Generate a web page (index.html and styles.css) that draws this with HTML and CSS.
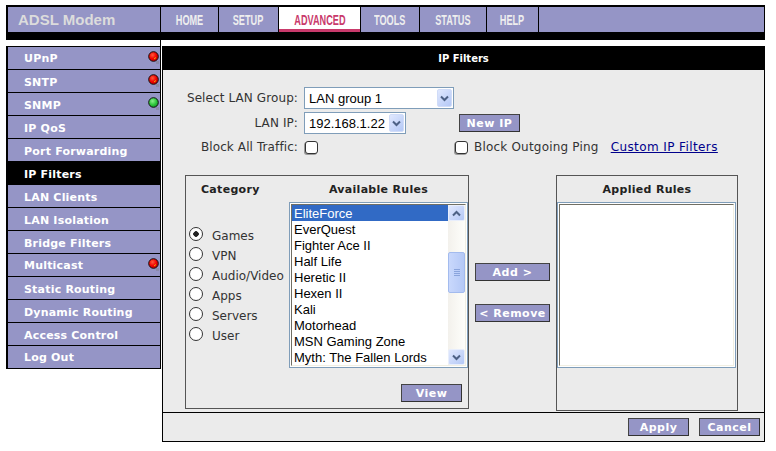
FILE: index.html
```html
<!DOCTYPE html>
<html lang="en">
<head>
<meta charset="utf-8">
<title>ADSL Modem - IP Filters</title>
<link rel="stylesheet" href="styles.css">
</head>
<body>
<svg class="defs" width="0" height="0" aria-hidden="true">
  <defs>
    <radialGradient id="red" cx="40%" cy="35%" r="65%"><stop offset="0" stop-color="#ff5a3a"/><stop offset=".6" stop-color="#f00000"/><stop offset="1" stop-color="#c80000"/></radialGradient>
    <radialGradient id="green" cx="40%" cy="35%" r="65%"><stop offset="0" stop-color="#8af08a"/><stop offset=".6" stop-color="#2fc83c"/><stop offset="1" stop-color="#159a28"/></radialGradient>
    <symbol id="led-red" viewBox="0 0 12 13"><path d="M8 10l3 0 0 3-3 0z" fill="#8a8aa8"/><circle cx="5.5" cy="5.5" r="4.8" fill="url(#red)" stroke="#111" stroke-width="1"/><path d="M6 8l2-1.5" stroke="#e9b400" stroke-width="1"/></symbol>
    <symbol id="led-green" viewBox="0 0 12 13"><path d="M8 10l3 0 0 3-3 0z" fill="#8a8aa8"/><circle cx="5.5" cy="5.5" r="4.8" fill="url(#green)" stroke="#111" stroke-width="1"/></symbol>
    <symbol id="chev-down" viewBox="0 0 9 7"><path d="M1 1.5l3.5 3.5 3.5-3.5" fill="none" stroke="#4d6185" stroke-width="2"/></symbol>
    <symbol id="chev-up" viewBox="0 0 9 7"><path d="M1 5.5l3.5-3.5 3.5 3.5" fill="none" stroke="#4d6185" stroke-width="2"/></symbol>
  </defs>
</svg>
<div class="frame">
  <header class="topbar">
    <div class="brand">ADSL Modem</div>
    <nav class="tabs">
      <a class="tab tab-home"><span>HOME</span></a>
      <a class="tab tab-setup"><span>SETUP</span></a>
      <a class="tab tab-adv active"><span>ADVANCED</span></a>
      <a class="tab tab-tools"><span>TOOLS</span></a>
      <a class="tab tab-status"><span>STATUS</span></a>
      <a class="tab tab-help"><span>HELP</span></a>
      <span class="tab-rest"></span>
    </nav>
  </header>
  <div class="strip"><span class="strip-left"></span><span class="strip-right"></span></div>
  <div class="columns">
    <aside class="side">
      <a class="side-item"><span>UPnP</span><svg class="led"><use href="#led-red"/></svg></a>
      <a class="side-item"><span>SNTP</span><svg class="led"><use href="#led-red"/></svg></a>
      <a class="side-item"><span>SNMP</span><svg class="led"><use href="#led-green"/></svg></a>
      <a class="side-item"><span>IP QoS</span></a>
      <a class="side-item"><span>Port Forwarding</span></a>
      <a class="side-item current"><span>IP Filters</span></a>
      <a class="side-item"><span>LAN Clients</span></a>
      <a class="side-item"><span>LAN Isolation</span></a>
      <a class="side-item"><span>Bridge Filters</span></a>
      <a class="side-item raised"><span>Multicast</span><svg class="led"><use href="#led-red"/></svg></a>
      <a class="side-item"><span>Static Routing</span></a>
      <a class="side-item"><span>Dynamic Routing</span></a>
      <a class="side-item"><span>Access Control</span></a>
      <a class="side-item raised"><span>Log Out</span></a>
    </aside>
    <main class="main">
      <h1 class="title">IP Filters</h1>
      <div class="content">
        <div class="row row-group">
          <label class="row-label">Select LAN Group:</label>
          <div class="select select-group"><span class="select-val">LAN group 1</span><span class="select-btn"><svg class="chev"><use href="#chev-down"/></svg></span></div>
        </div>
        <div class="row row-ip">
          <label class="row-label">LAN IP:</label>
          <div class="select select-ip"><span class="select-val">192.168.1.22</span><span class="select-btn"><svg class="chev"><use href="#chev-down"/></svg></span></div>
          <button class="btn btn-newip">New IP</button>
        </div>
        <div class="row row-block">
          <label class="row-label">Block All Traffic:</label>
          <input class="check check-all" type="checkbox">
          <input class="check check-ping" type="checkbox">
          <label class="ping-label">Block Outgoing Ping</label>
          <a class="link">Custom IP Filters</a>
        </div>
        <div class="panels">
          <section class="box box-left">
            <div class="box-head">
              <span class="head-cat">Category</span>
              <span class="head-avail">Available Rules</span>
            </div>
            <div class="box-body">
              <div class="radios">
                <label class="radio-row"><input class="radio" type="radio" name="cat" checked><span>Games</span></label>
                <label class="radio-row"><input class="radio" type="radio" name="cat"><span>VPN</span></label>
                <label class="radio-row"><input class="radio" type="radio" name="cat"><span>Audio/Video</span></label>
                <label class="radio-row"><input class="radio" type="radio" name="cat"><span>Apps</span></label>
                <label class="radio-row"><input class="radio" type="radio" name="cat"><span>Servers</span></label>
                <label class="radio-row"><input class="radio" type="radio" name="cat"><span>User</span></label>
              </div>
              <div class="list">
                <div class="list-inner">
                  <ul class="rules">
                    <li class="selected">EliteForce</li>
                    <li>EverQuest</li>
                    <li>Fighter Ace II</li>
                    <li>Half Life</li>
                    <li>Heretic II</li>
                    <li>Hexen II</li>
                    <li>Kali</li>
                    <li>Motorhead</li>
                    <li>MSN Gaming Zone</li>
                    <li>Myth: The Fallen Lords</li>
                  </ul>
                  <div class="scroll">
                    <span class="scroll-btn"><svg class="chev"><use href="#chev-up"/></svg></span>
                    <span class="scroll-thumb"><i></i><i></i><i></i><i></i></span>
                    <span class="scroll-btn scroll-btn-end"><svg class="chev"><use href="#chev-down"/></svg></span>
                  </div>
                </div>
              </div>
            </div>
            <div class="box-foot"><button class="btn">View</button></div>
          </section>
          <div class="moves">
            <button class="btn btn-move">Add &gt;</button>
            <button class="btn btn-move">&lt; Remove</button>
          </div>
          <section class="box box-right">
            <div class="box-head box-head-center">Applied Rules</div>
            <div class="list list-applied"><div class="list-inner"></div></div>
          </section>
        </div>
      </div>
      <footer class="actions">
        <button class="btn">Apply</button>
        <button class="btn">Cancel</button>
      </footer>
    </main>
  </div>
</div>
</body>
</html>
```
FILE: styles.css
```css
* { box-sizing: border-box; }
html, body { margin: 0; padding: 0; background: #fff; }
body { padding: 5px 0 0 6px; font-family: "DejaVu Sans", Verdana, sans-serif; font-size: 12px; color: #333; }
.defs { position: absolute; }
.frame { width: 759px; }

.topbar { display: flex; height: 35px; background: #000; padding: 2px 1px 8px 2px; }
.brand { width: 152px; background: #9595c6; color: #dcdcdc; font: bold 15px/25px "Liberation Sans", Arial, sans-serif; padding-left: 10px; }
.tabs { display: flex; flex: 1; margin-left: 1px; gap: 1px; }
.tab { display: flex; justify-content: center; background: #9595c6; color: #eee; font: bold 15px/25px "Liberation Sans", sans-serif; white-space: nowrap; }
.tab span { display: block; transform: scaleX(.61); }
.tab-home { width: 57px; }
.tab-setup { width: 59px; }
.tab-adv { width: 81px; }
.tab-tools { width: 58px; }
.tab-status { width: 66px; }
.tab-help { width: 51px; }
.tab.active { background: #fff; color: #c93a6b; border-bottom: 3px solid #c93a6b; }
.tab-rest { flex: 1; background: #9595c6; }

.strip { display: flex; height: 6px; background: #fff; padding-left: 2px; }
.strip-left { width: 152px; }
.strip-right { flex: 1; border-left: 1px solid #000; }

.columns { display: flex; align-items: flex-start; }
.side { width: 155px; background: #000; border: 1px solid #000; border-left-width: 2px; display: flex; flex-direction: column; gap: 1px; }
.side-item { height: 22px; background: #9595c6; color: #fff; font-weight: bold; font-size: 11px; line-height: 20px; padding: 0 0 0 16px; display: flex; justify-content: space-between; align-items: center; letter-spacing: .2px; }
.side-item span { padding-top: 4px; }
.side-item.raised span { padding-top: 2px; }
.side-item:first-child span { padding-top: 2px; }
.side-item.current { background: #000; }
.led { width: 12px; height: 13px; margin-top: -2px; }

.main { width: 603px; margin-left: 1px; height: 396px; border: 1px solid #000; border-top: 0; background: #ebebeb; display: flex; flex-direction: column; }
.title { margin: 0; height: 24px; background: #000; color: #fff; font-size: 10px; font-weight: bold; line-height: 25px; text-align: center; }
.content { flex: 1; padding-top: 17px; }
.actions { height: 29px; border-top: 1px solid #000; display: flex; justify-content: flex-end; align-items: center; gap: 10px; padding: 0 4px 0 0; }

.row { display: flex; align-items: center; }
.row-label { width: 135px; text-align: right; margin-right: 6px; letter-spacing: .1px; white-space: nowrap; }
.row-group { height: 22px; margin-bottom: 3px; }
.row-ip { height: 22px; margin-bottom: 6px; }
.row-block { height: 14px; }
.select { display: flex; align-items: center; height: 22px; background: #fff; border: 1px solid #7f9db9; font: 13px "Liberation Sans", Arial, sans-serif; color: #000; padding: 0 1px 0 4px; }
.select-val { flex: 1; }
.select-group { width: 150px; }
.select-ip { width: 102px; }
.select-btn { width: 15px; height: 18px; background: linear-gradient(135deg, #e0e8fe, #b4c8f6); border: 1px solid #d0dcf8; border-radius: 2px; display: flex; align-items: center; justify-content: center; }
.chev { width: 9px; height: 7px; }

.btn { display: block; width: 61px; height: 18px; padding: 0; background: #9595c6; color: #fff; font: bold 11px "DejaVu Sans", Verdana, sans-serif; border: 1px solid #333; border-top-color: #444; border-left-color: #444; border-radius: 0; letter-spacing: .5px; }
.btn-newip { margin-left: 53px; }

.check { appearance: none; margin: 0; width: 13px; height: 13px; background: #fff; border: 1px solid #333; border-radius: 3px; box-shadow: -1px 1px 0 #999; }
.check-all { margin-left: 1px; }
.check-ping { margin-left: 137px; }
.ping-label { margin-left: 6px; letter-spacing: .2px; white-space: nowrap; }
.link { margin-left: 12px; color: #00008b; text-decoration: underline; letter-spacing: .4px; white-space: nowrap; }

.panels { display: flex; align-items: flex-start; margin: 21px 0 0 22px; }
.box { border: 1px solid #555; }
.box-left { width: 284px; height: 234px; }
.box-right { width: 182px; height: 236px; margin-left: 6px; }
.box-head { height: 26px; display: flex; align-items: center; font-weight: bold; font-size: 11px; color: #222; letter-spacing: .3px; }
.head-cat { width: 103px; padding-left: 15px; }
.head-avail { width: 179px; text-align: center; }
.box-head-center { justify-content: center; }
.box-body { display: flex; }
.radios { width: 103px; padding: 22px 0 0 3px; }
.radio-row { display: flex; align-items: center; gap: 9px; height: 20px; white-space: nowrap; }
.radio-row span { padding-top: 4px; }
.radio { appearance: none; margin: 0; width: 14px; height: 14px; background: #fff; border: 1px solid #333; border-radius: 50%; flex: none; }
.radio:checked { background: radial-gradient(circle, #222 0 2.5px, #fff 3px); }
.list { width: 179px; height: 166px; border: 1px solid #7f9db9; background: #fff; padding: 1px; }
.list-inner { height: 100%; display: flex; border: 1px solid #f1efe2; border-top: 1px solid #716f64; border-left: 1px solid #716f64; background: #fff; }
.rules { list-style: none; margin: 0; padding: 0; width: 156px; font: 13px/16px "Liberation Sans", Arial, sans-serif; color: #000; }
.rules li { height: 16px; padding: 1px 0 0 2px; white-space: nowrap; }
.rules .selected { background: #316ac5; color: #fff; }
.scroll { flex: 1; display: flex; flex-direction: column; background: linear-gradient(90deg, #f3f1ec, #fefefb); }
.scroll-btn { height: 16px; background: linear-gradient(135deg, #e0e8fe, #b4c8f6); border: 1px solid #e8eefc; border-radius: 2px; display: flex; align-items: center; justify-content: center; }
.scroll-btn-end { margin-top: auto; }
.scroll-thumb { height: 41px; margin-top: 31px; background: linear-gradient(90deg, #c9d8fc, #b4c8f6); border: 1px solid #a3bbee; border-radius: 2px; display: flex; flex-direction: column; align-items: center; justify-content: center; gap: 1px; }
.scroll-thumb i { display: block; width: 6px; height: 1px; background: #8aa4dc; }
.box-foot { display: flex; justify-content: flex-end; padding: 16px 6px 0 0; }
.moves { display: flex; flex-direction: column; gap: 23px; padding-top: 88px; margin-left: 6px; }
.btn-move { width: 75px; }
```
